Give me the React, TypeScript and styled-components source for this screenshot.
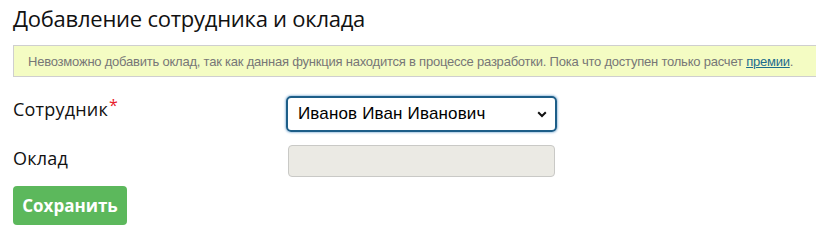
import React from 'react';
import styled, { createGlobalStyle } from 'styled-components';

const GlobalStyle = createGlobalStyle`
  html, body {
    margin: 0;
    padding: 0;
    background: #fff;
    overflow: hidden;
  }
`;

const Page = styled.div`
  padding: 0 0 0 13px;
  font-family: 'Open Sans', 'Noto Sans', sans-serif;
  color: #111;
`;

const Title = styled.h2`
  margin: 0;
  padding-top: 3px;
  height: 42px;
  font-size: 22px;
  font-weight: 400;
  line-height: 30px;
  letter-spacing: -0.25px;
`;

const Notice = styled.div`
  box-sizing: border-box;
  height: 32px;
  margin-right: -4px;
  padding: 0 14px;
  display: flex;
  align-items: center;
  background: #f4fcc3;
  border: 1px solid #cfcfcf;
  font-family: 'Liberation Sans', Arial, sans-serif;
  font-size: 13px;
  letter-spacing: -0.22px;
  white-space: nowrap;
  color: #777;
`;

const NoticeLink = styled.a`
  color: #1b6b8e;
  text-decoration: underline;
`;

const Form = styled.form`
  display: flex;
  flex-direction: column;
  padding-top: 19px;
`;

const Row = styled.div<{ $height: number }>`
  display: grid;
  grid-template-columns: 273px 271px;
  align-items: start;
  height: ${p => p.$height}px;
`;

const Label = styled.label`
  font-size: 18px;
  line-height: 24px;
  padding-top: 1px;
  letter-spacing: 0.2px;
`;

const Required = styled.span`
  position: relative;
  top: -5px;
  color: #e8202a;
  font-size: 16px;
  line-height: 0;
  margin-left: 1px;
`;

const SelectBox = styled.div`
  box-sizing: border-box;
  height: 36px;
  border: 2px solid #1d5e88;
  border-radius: 5px;
  box-shadow: 0 0 2px 1px rgba(60, 130, 190, 0.45);
  display: flex;
  align-items: center;
  padding: 0 10px;
  font-family: 'Liberation Sans', Arial, sans-serif;
  font-size: 17px;
  letter-spacing: 0.15px;
  color: #000;
`;

const SelectText = styled.span`
  flex: 1;
`;

const Chevron = styled.svg`
  width: 10px;
  height: 7px;
  margin-right: -2px;
`;

const Input = styled.div`
  box-sizing: border-box;
  height: 32px;
  margin: 0 2px;
  background: #ebeae4;
  border: 1px solid #c9c9c6;
  border-radius: 4px;
`;

const SaveButton = styled.button`
  align-self: flex-start;
  box-sizing: border-box;
  width: 114px;
  height: 39px;
  border: none;
  border-radius: 4px;
  background: #5cb85c;
  color: #fff;
  font-family: 'Open Sans', 'Noto Sans', sans-serif;
  font-size: 17px;
  font-weight: 700;
  cursor: pointer;
`;

export default function App() {
  return (
    <>
      <GlobalStyle />
      <Page>
        <Title>Добавление сотрудника и оклада</Title>
        <Notice>
          <span>
            Невозможно добавить оклад, так как данная функция находится в процессе разработки. Пока что доступен только расчет{' '}
            <NoticeLink href="#">премии</NoticeLink>.
          </span>
        </Notice>
        <Form onSubmit={e => e.preventDefault()}>
          <Row $height={49}>
            <Label>
              Сотрудник<Required>*</Required>
            </Label>
            <SelectBox>
              <SelectText>Иванов Иван Иванович</SelectText>
              <Chevron viewBox="0 0 10 7">
                <path d="M1.2 1.2 L5 5 L8.8 1.2" fill="none" stroke="#111" strokeWidth="2" />
              </Chevron>
            </SelectBox>
          </Row>
          <Row $height={41}>
            <Label>Оклад</Label>
            <Input />
          </Row>
          <SaveButton type="submit">Сохранить</SaveButton>
        </Form>
      </Page>
    </>
  );
}
